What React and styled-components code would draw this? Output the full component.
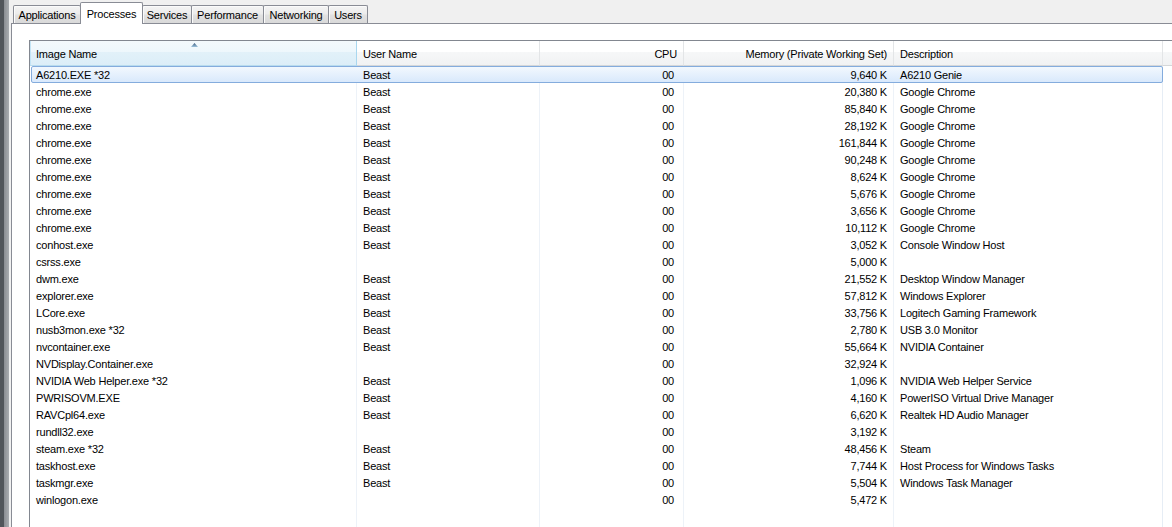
import React from "react";
import styled, { createGlobalStyle, css } from "styled-components";

const Global = createGlobalStyle`
  html, body { margin: 0; padding: 0; height: 100%; overflow: hidden; }
  body { background: #f0f0f0; font-family: "Liberation Sans", Arial, sans-serif; font-size: 11px; letter-spacing: -0.2px; color: #000; }
  #root { height: 100%; }
`;

const Window = styled.div`
  display: flex;
  height: 100%;
`;

const Frame = styled.div`
  flex: 0 0 9px;
  background: linear-gradient(to right, #51555a 0, #51555a 4px, #8a8d92 4px, #a9acb0 9px);
`;

const Main = styled.div`
  flex: 1;
  display: flex;
  flex-direction: column;
  min-width: 0;
  padding-left: 2px;
  background: #f0f0f0;
`;

const TabStrip = styled.div`
  display: flex;
  align-items: flex-end;
  height: 23px;
  padding-left: 2px;
`;

const Tab = styled.div`
  box-sizing: border-box;
  width: ${(p) => p.$w}px;
  height: 18px;
  border: 1px solid #898c95;
  border-bottom: none;
  border-radius: 2px 2px 0 0;
  margin-right: -1px;
  background: linear-gradient(#f4f4f4 0%, #ececec 45%, #e1e1e1 55%, #d9d9d9 100%);
  box-shadow: inset 1px 1px 0 #fbfbfb;
  display: flex;
  align-items: center;
  justify-content: center;
  line-height: 16px;
  padding-top: 1px;
  white-space: nowrap;
  ${(p) =>
    p.$active &&
    css`
      height: 22px;
      margin-bottom: -1px;
      position: relative;
      z-index: 1;
      background: #ffffff;
      box-shadow: none;
      align-items: flex-start;
      padding-top: 3px;
    `}
`;

const Panel = styled.div`
  flex: 1;
  background: #ffffff;
  border-left: 1px solid #898c95;
  border-top: 1px solid #898c95;
  padding: 16px 0 0 17px;
  overflow: hidden;
`;

const ListView = styled.div`
  width: 1200px;
  height: 600px;
  border: 1px solid #828790;
  background: #ffffff;
  display: flex;
  flex-direction: column;
`;

const cols = "327px 183px 144px 210px 269px 1fr";

const HeaderRow = styled.div`
  display: grid;
  grid-template-columns: ${cols};
  height: 25px;
`;

const HeaderCell = styled.div`
  position: relative;
  box-sizing: border-box;
  height: 25px;
  display: flex;
  align-items: center;
  justify-content: ${(p) => (p.$right ? "flex-end" : "flex-start")};
  padding: 1px ${(p) => p.$pr || 6}px 0 6px;
  border-right: 1px solid #e3e5e7;
  border-bottom: 1px solid #d5d7d9;
  background: linear-gradient(#ffffff 0%, #ffffff 45%, #f6f7f8 46%, #f1f2f3 100%);
  white-space: nowrap;
  ${(p) =>
    p.$sorted &&
    css`
      background: linear-gradient(#f3f9fc 0%, #eef7fc 45%, #e2f1f9 46%, #dceef8 100%);
      border-right-color: #a9d7ef;
      border-bottom-color: #b9dcee;
      box-shadow: inset 1px 0 0 #c3e4f5;
    `}
  ${(p) =>
    p.$filler &&
    css`
      border-right: none;
    `}
`;

const SortArrow = styled.svg`
  position: absolute;
  left: 161px;
  top: 2px;
`;

const Body = styled.div`
  flex: 1;
  background:
    linear-gradient(#edf2f8, #edf2f8) 326px 0 / 1px 100% no-repeat,
    linear-gradient(#edf2f8, #edf2f8) 509px 0 / 1px 100% no-repeat,
    linear-gradient(#edf2f8, #edf2f8) 653px 0 / 1px 100% no-repeat,
    linear-gradient(#edf2f8, #edf2f8) 863px 0 / 1px 100% no-repeat,
    linear-gradient(#e6edf5, #e6edf5) 1132px 0 / 1px 100% no-repeat,
    #ffffff;
`;

const Row = styled.div`
  position: relative;
  display: grid;
  grid-template-columns: ${cols};
  height: 17px;
  line-height: 17px;
  ${(p) =>
    p.$selected &&
    css`
      &::before {
        content: "";
        position: absolute;
        left: 1px;
        top: 0;
        width: 1132px;
        height: 17px;
        box-sizing: border-box;
        border: 1px solid #84acdd;
        border-radius: 2px;
        background: linear-gradient(#f2f8fe, #d9e9fc);
      }
    `}
`;

const Cell = styled.div`
  position: relative;
  padding: 1px ${(p) => p.$pr || 6}px 0 6px;
  height: 16px;
  line-height: 17px;
  text-align: ${(p) => (p.$right ? "right" : "left")};
  white-space: nowrap;
  overflow: hidden;
`;

const tabs = [
  ["Applications", 68],
  ["Processes", 63, true],
  ["Services", 50],
  ["Performance", 73],
  ["Networking", 66],
  ["Users", 40],
];

const chrome = ["20,380", "85,840", "28,192", "161,844", "90,248", "8,624", "5,676", "3,656", "10,112"];

const rows = [
  ["A6210.EXE *32", "Beast", "9,640", "A6210 Genie"],
  ...chrome.map((m) => ["chrome.exe", "Beast", m, "Google Chrome"]),
  ["conhost.exe", "Beast", "3,052", "Console Window Host"],
  ["csrss.exe", "", "5,000", ""],
  ["dwm.exe", "Beast", "21,552", "Desktop Window Manager"],
  ["explorer.exe", "Beast", "57,812", "Windows Explorer"],
  ["LCore.exe", "Beast", "33,756", "Logitech Gaming Framework"],
  ["nusb3mon.exe *32", "Beast", "2,780", "USB 3.0 Monitor"],
  ["nvcontainer.exe", "Beast", "55,664", "NVIDIA Container"],
  ["NVDisplay.Container.exe", "", "32,924", ""],
  ["NVIDIA Web Helper.exe *32", "Beast", "1,096", "NVIDIA Web Helper Service"],
  ["PWRISOVM.EXE", "Beast", "4,160", "PowerISO Virtual Drive Manager"],
  ["RAVCpl64.exe", "Beast", "6,620", "Realtek HD Audio Manager"],
  ["rundll32.exe", "", "3,192", ""],
  ["steam.exe *32", "Beast", "48,456", "Steam"],
  ["taskhost.exe", "Beast", "7,744", "Host Process for Windows Tasks"],
  ["taskmgr.exe", "Beast", "5,504", "Windows Task Manager"],
  ["winlogon.exe", "", "5,472", ""],
];

export default function App() {
  return (
    <>
      <Global />
      <Window>
        <Frame />
        <Main>
          <TabStrip>
            {tabs.map(([label, w, active]) => (
              <Tab key={label} $w={w} $active={active}>
                {label}
              </Tab>
            ))}
          </TabStrip>
          <Panel>
            <ListView>
              <HeaderRow>
                <HeaderCell $sorted>
                  <SortArrow width="7" height="5" viewBox="0 0 7 5">
                    <defs>
                      <linearGradient id="sa" x1="0" y1="0" x2="0" y2="1">
                        <stop offset="0" stopColor="#3b5a7c" />
                        <stop offset="1" stopColor="#9cc3de" />
                      </linearGradient>
                    </defs>
                    <path d="M3.5 0 L7 4 L0 4 Z" fill="url(#sa)" />
                  </SortArrow>
                  Image Name
                </HeaderCell>
                <HeaderCell>User Name</HeaderCell>
                <HeaderCell $right $pr={6}>CPU</HeaderCell>
                <HeaderCell $right $pr={6}>Memory (Private Working Set)</HeaderCell>
                <HeaderCell>Description</HeaderCell>
                <HeaderCell $filler />
              </HeaderRow>
              <Body>
                {rows.map(([name, user, mem, desc], i) => (
                  <Row key={i} $selected={i === 0}>
                    <Cell>{name}</Cell>
                    <Cell>{user}</Cell>
                    <Cell $right $pr={10}>00</Cell>
                    <Cell $right $pr={7}>{mem} K</Cell>
                    <Cell>{desc}</Cell>
                    <Cell />
                  </Row>
                ))}
              </Body>
            </ListView>
          </Panel>
        </Main>
      </Window>
    </>
  );
}
